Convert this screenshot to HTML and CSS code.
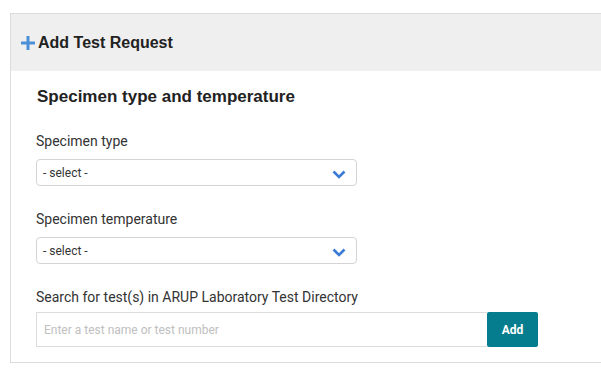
FILE: index.html
```html
<!DOCTYPE html>
<html lang="en">
<head>
  <meta charset="UTF-8" />
  <title>Add Test Request</title>
  <link rel="stylesheet" href="styles.css">
</head>
<body>
  <div class="panel">
    <div class="panel-header">
      <svg class="plus-icon" width="14" height="14" viewBox="0 0 14 14" aria-hidden="true">
        <rect x="5.5" y="0" width="3" height="14" fill="#4a8fd8" />
        <rect x="0" y="5.5" width="14" height="3" fill="#4a8fd8" />
      </svg>
      <span class="panel-title">Add Test Request</span>
    </div>

    <div class="panel-body">
      <h2 class="section-title">Specimen type and temperature</h2>

      <div class="field">
        <label class="field-label">Specimen type</label>
        <div class="select-box">
          <span>- select -</span>
          <svg class="chevron" width="14" height="9" viewBox="0 0 14 9" aria-hidden="true">
            <path d="M1.5 1.5 L7 7 L12.5 1.5" fill="none" stroke="#3a7bd5" stroke-width="2.6" />
          </svg>
        </div>
      </div>

      <div class="field">
        <label class="field-label">Specimen temperature</label>
        <div class="select-box">
          <span>- select -</span>
          <svg class="chevron" width="14" height="9" viewBox="0 0 14 9" aria-hidden="true">
            <path d="M1.5 1.5 L7 7 L12.5 1.5" fill="none" stroke="#3a7bd5" stroke-width="2.6" />
          </svg>
        </div>
      </div>

      <div class="field">
        <label class="field-label search-label">Search for test(s) in ARUP Laboratory Test Directory</label>
        <div class="search-row">
          <input class="search-input" type="text" placeholder="Enter a test name or test number" />
          <button class="add-button">Add</button>
        </div>
      </div>
    </div>
  </div>
</body>
</html>
```

FILE: styles.css
```css
* {
  margin: 0;
  padding: 0;
  box-sizing: border-box;
}

body {
  font-family: Roboto, 'Liberation Sans', sans-serif;
  background-color: #fff;
  color: #333;
  overflow: hidden;
}

.panel {
  margin: 13px 0 0 10px;
  width: 640px;
  border: 1px solid #dcdcdc;
}

/* Grey header bar */
.panel-header {
  background-color: #efefef;
  height: 57px;
  display: flex;
  align-items: center;
  gap: 3px;
  padding-left: 10px;
}

.plus-icon {
  margin-top: 1px;
}

.panel-title {
  font-family: 'Liberation Sans', Arial, sans-serif;
  font-weight: bold;
  font-size: 16px;
  color: #222;
}

.panel-body {
  padding: 16px 0 15px 25px;
}

.section-title {
  font-family: 'Liberation Sans', Arial, sans-serif;
  font-weight: bold;
  font-size: 17px;
  color: #222;
  margin: 0 0 26px 1px;
}

.field {
  margin-bottom: 25px;
}

.field:last-child {
  margin-bottom: 0;
}

.field-label {
  display: block;
  font-size: 14px;
  color: #333;
  margin-bottom: 10px;
}

.search-label {
  margin-bottom: 7px;
}

.select-box {
  width: 321px;
  height: 27px;
  border: 1px solid #d4d4d4;
  border-radius: 4px;
  display: flex;
  align-items: center;
  justify-content: space-between;
  padding: 0 10px 0 6px;
  font-size: 12px;
  color: #333;
}

.chevron {
  margin-top: 4px;
}

.search-row {
  display: flex;
  height: 35px;
}

.search-input {
  width: 451px;
  height: 35px;
  border: 1px solid #dcdcdc;
  border-right: none;
  padding: 0 7px;
  font-family: Roboto, sans-serif;
  font-size: 12px;
  color: #333;
  outline: none;
}

.search-input::placeholder {
  color: #c0c0c0;
}

.add-button {
  width: 51px;
  height: 35px;
  background-color: #067c8f;
  border: none;
  border-radius: 2px;
  color: #fff;
  font-family: Roboto, sans-serif;
  font-weight: bold;
  font-size: 12px;
}
```
